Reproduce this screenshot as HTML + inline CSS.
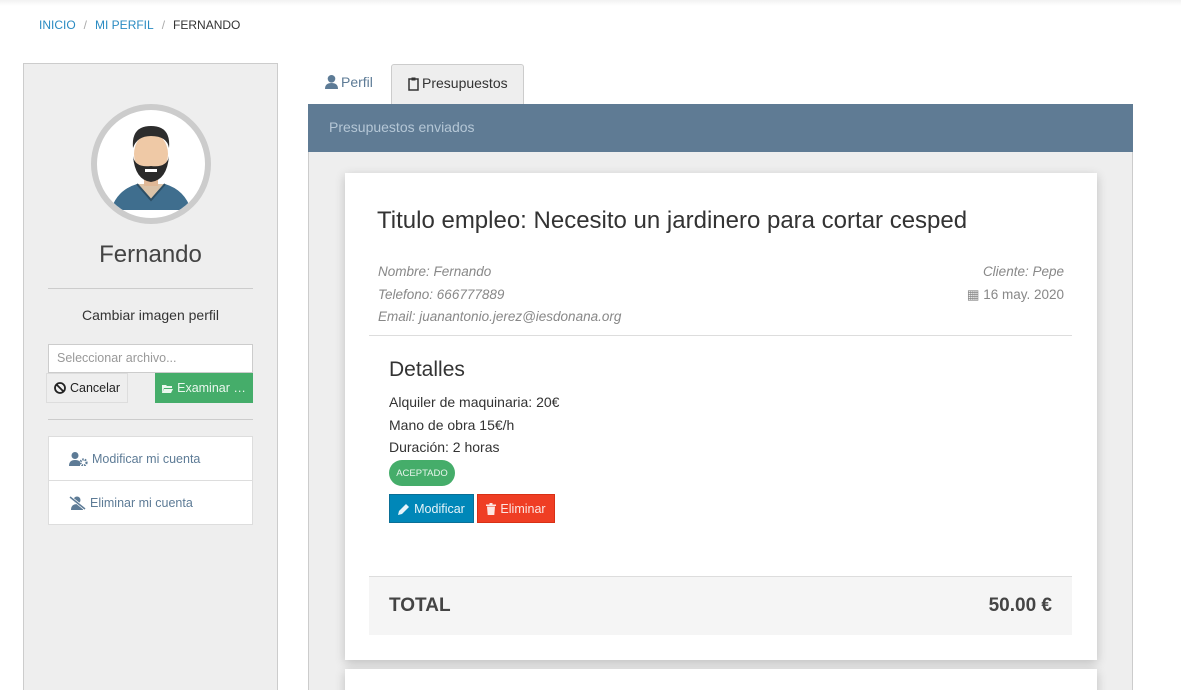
<!DOCTYPE html>
<html style="overflow:hidden"><head><meta charset="utf-8"><style>
*{box-sizing:border-box;margin:0;padding:0}
html,body{width:1181px;height:690px;overflow:hidden}
body{background:#fff;font-family:"Liberation Sans",sans-serif;color:#333;position:relative}
.a{position:absolute}
.crumb{left:39px;top:18px;font-size:12px;color:#333}
.crumb span.l{color:#2a8bc2}
.crumb span.s{color:#aaa;margin:0 8px}
.side{left:23px;top:63px;width:255px;height:627px;background:#eee;border:1px solid #ccc;border-bottom:none}
.btn{position:absolute;font-size:12.5px;display:flex;align-items:center;justify-content:center;gap:4px}
.list{left:48px;width:205px;height:45px;background:#fff;border:1px solid #ddd;font-size:12.5px;color:#5d7b96;display:flex;align-items:center;padding-left:20px;gap:4px}
.card{background:#fff;box-shadow:0 3px 10px rgba(0,0,0,.2)}
.it{font-style:italic;font-size:13.5px;color:#888}
svg{flex:none}
</style></head><body>
<div style="position:absolute;left:0;top:0;width:1181px;height:6px;background:linear-gradient(#f2f2f2,#fff)"></div>
<div class="a crumb"><span class="l">INICIO</span><span class="s">/</span><span class="l">MI PERFIL</span><span class="s">/</span>FERNANDO</div>

<div class="a side"></div>
<div class="a" style="left:91px;top:104px;width:120px;height:120px;border-radius:50%;border:6px solid #ccc;background:#fff;overflow:hidden">
<svg width="108" height="108" viewBox="0 0 108 108">
<path d="M14 100 Q20 80 40 74 L68 74 Q88 80 94 100 Z" fill="#3f6e8e"/>
<path d="M40 74 L54 90 L68 74" fill="#dbc3a8" stroke="#2c4f66" stroke-width="2"/>
<rect x="47" y="56" width="14" height="20" fill="#e0b896"/>
<ellipse cx="54" cy="44" rx="17" ry="21" fill="#efc9a6"/>
<path d="M36 46 Q38 70 54 72 Q70 70 72 46 Q70 58 54 56 Q38 58 36 46Z" fill="#2a2a2a"/>
<path d="M36 38 Q34 16 54 16 Q74 16 72 38 Q70 26 54 26 Q40 26 36 38Z" fill="#2d2d2d"/>
<rect x="48" y="59" width="12" height="3" fill="#fff"/>
</svg></div>
<div class="a" style="left:23px;top:241px;width:255px;text-align:center;font-size:24px;color:#444">Fernando</div>
<div class="a" style="left:48px;top:288px;width:205px;border-top:1px solid #ccc"></div>
<div class="a" style="left:23px;top:307px;width:255px;text-align:center;font-size:14px;color:#333">Cambiar imagen perfil</div>
<div class="a" style="left:48px;top:344px;width:205px;height:29px;background:#fff;border:1px solid #ccc;font-size:12.5px;color:#999;padding:6px 8px">Seleccionar archivo...</div>
<div class="btn" style="left:46px;top:373px;width:82px;height:30px;background:#eee;border:1px solid #ddd;color:#222"><svg width="12" height="12" viewBox="0 0 12 12"><circle cx="6" cy="6" r="5" fill="none" stroke="#222" stroke-width="1.8"/><path d="M2.5 2.5L9.5 9.5" stroke="#222" stroke-width="1.8"/></svg>Cancelar</div>
<div class="btn" style="left:155px;top:373px;width:98px;height:30px;background:#45ad6a;color:#eaf7ee"><svg width="11" height="9" viewBox="0 0 11 9"><path d="M0 1h4l1 1h5v2H2L0 9z M2 5h9l-2 4H0z" fill="#eaf7ee"/></svg>Examinar …</div>
<div class="a" style="left:48px;top:419px;width:205px;border-top:1px solid #ccc"></div>
<div class="a list" style="top:436px"><svg width="19" height="14" viewBox="0 0 19 14"><circle cx="6" cy="3.5" r="3.5" fill="#5d7b96"/><path d="M0 14Q0 8 6 8Q10 8 11 10V14Z" fill="#5d7b96"/><circle cx="14.5" cy="10.5" r="3" fill="none" stroke="#5d7b96" stroke-width="2.2" stroke-dasharray="1.5 1"/></svg>Modificar mi cuenta</div>
<div class="a list" style="top:480px"><svg width="17" height="14" viewBox="0 0 17 14"><circle cx="8" cy="4" r="3.5" fill="#5d7b96"/><path d="M2 14Q2 8 8 8Q14 8 14 14Z" fill="#5d7b96"/><path d="M1 1L16 13" stroke="#fff" stroke-width="3"/><path d="M1 1L16 13" stroke="#5d7b96" stroke-width="1.5"/></svg>Eliminar mi cuenta</div>

<div class="a" style="left:325px;top:74px;font-size:14px;color:#5d7b96;display:flex;gap:3px;align-items:center"><svg width="13" height="14" viewBox="0 0 13 14"><circle cx="6.5" cy="3.8" r="3.8" fill="#5d7b96"/><path d="M0 14Q0 8 6.5 8Q13 8 13 14Z" fill="#5d7b96"/></svg>Perfil</div>
<div class="a" style="left:391px;top:64px;width:133px;height:41px;background:#eee;border:1px solid #ccc;border-bottom:none;border-radius:3px 3px 0 0;font-size:14px;padding:10px 0 0 16px;color:#333;display:flex;gap:3px;align-items:flex-start"><svg width="11" height="14" viewBox="0 0 11 14" style="margin-top:2px"><rect x="1" y="2" width="9" height="11" fill="none" stroke="#333" stroke-width="1.5"/><rect x="3.5" y="0.5" width="4" height="3" fill="#333"/></svg>Presupuestos</div>
<div class="a" style="left:308px;top:104px;width:825px;height:586px;background:#eee;border:1px solid #ccc;border-bottom:none"></div>
<div class="a" style="left:308px;top:104px;width:825px;height:48px;background:#5f7b94;color:#b5c7d6;font-size:14px;padding:15px 21px">Presupuestos enviados</div>

<div class="a card" style="left:345px;top:173px;width:752px;height:487px"></div>
<div class="a card" style="left:345px;top:669px;width:752px;height:40px"></div>
<div class="a" style="left:377px;top:207px;font-size:24px;color:#333">Titulo empleo: Necesito un jardinero para cortar cesped</div>
<div class="a it" style="left:378px;top:261px;line-height:22.5px">Nombre: Fernando<br>Telefono: 666777889<br>Email: juanantonio.jerez@iesdonana.org</div>
<div class="a it" style="left:900px;top:261px;width:164px;text-align:right;line-height:22.5px">Cliente: Pepe<br><span style="font-style:normal">▦ 16 may. 2020</span></div>
<div class="a" style="left:369px;top:335px;width:703px;border-top:1px solid #ddd"></div>
<div class="a" style="left:389px;top:358px;font-size:21px;color:#333">Detalles</div>
<div class="a" style="left:389px;top:391px;font-size:14px;line-height:22.5px;color:#333">Alquiler de maquinaria: 20€<br>Mano de obra 15€/h<br>Duración: 2 horas</div>
<div class="a" style="left:389px;top:460px;width:66px;height:26px;border-radius:13px;background:#45ad6a;color:#e8f6ec;font-size:9.5px;display:flex;align-items:center;justify-content:center">ACEPTADO</div>
<div class="btn" style="left:389px;top:494px;width:85px;height:29px;background:#0087b8;border:1px solid #0a6f96;color:#e6f4fa"><svg width="12" height="12" viewBox="0 0 12 12"><path d="M0 12L1 8L8 1L11 4L4 11Z" fill="#e6f4fa"/></svg>Modificar</div>
<div class="btn" style="left:477px;top:494px;width:78px;height:29px;background:#ef3e24;border:1px solid #d83015;color:#fde6e2"><svg width="10" height="12" viewBox="0 0 10 12"><path d="M0 1.5h10v1.5H0zM3.5 0h3v1.5h-3zM1 3.5h8L8.3 12H1.7Z" fill="#fde6e2"/></svg>Eliminar</div>
<div class="a" style="left:369px;top:576px;width:703px;height:59px;background:#f5f5f5;border-top:1px solid #ddd;display:flex;justify-content:space-between;align-items:center;padding:0 20px;font-size:19px;font-weight:bold;color:#444"><span>TOTAL</span><span>50.00 €</span></div>
</body></html>
